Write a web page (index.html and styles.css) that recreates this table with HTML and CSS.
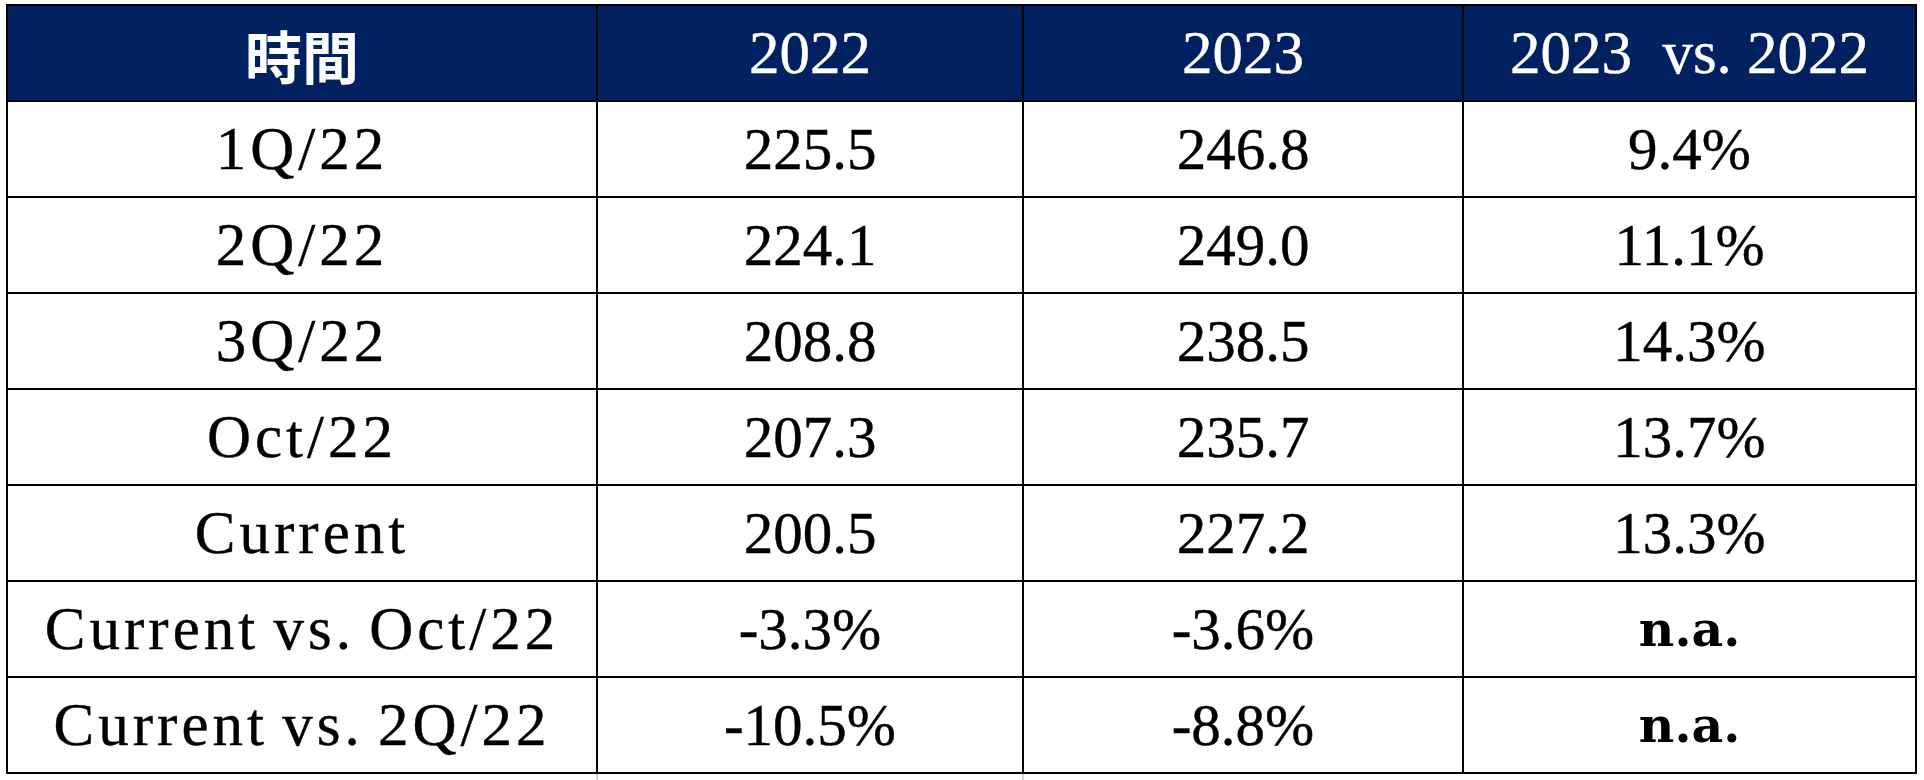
FILE: index.html
```html
<!DOCTYPE html>
<html lang="zh-Hant">
<head>
<meta charset="utf-8">
<title>Table</title>
<link rel="stylesheet" href="styles.css">
</head>
<body>
<div class="table">
  <div class="cell head cjk">時間</div>
  <div class="cell head">2022</div>
  <div class="cell head">2023</div>
  <div class="cell head pre">2023  vs. 2022</div>

  <div class="cell label">1Q/22</div>
  <div class="cell">225.5</div>
  <div class="cell">246.8</div>
  <div class="cell">9.4%</div>

  <div class="cell label">2Q/22</div>
  <div class="cell">224.1</div>
  <div class="cell">249.0</div>
  <div class="cell">11.1%</div>

  <div class="cell label">3Q/22</div>
  <div class="cell">208.8</div>
  <div class="cell">238.5</div>
  <div class="cell">14.3%</div>

  <div class="cell label">Oct/22</div>
  <div class="cell">207.3</div>
  <div class="cell">235.7</div>
  <div class="cell">13.7%</div>

  <div class="cell label">Current</div>
  <div class="cell">200.5</div>
  <div class="cell">227.2</div>
  <div class="cell">13.3%</div>

  <div class="cell label">Current vs. Oct/22</div>
  <div class="cell">-3.3%</div>
  <div class="cell">-3.6%</div>
  <div class="cell na">n.a.</div>

  <div class="cell label">Current vs. 2Q/22</div>
  <div class="cell">-10.5%</div>
  <div class="cell">-8.8%</div>
  <div class="cell na">n.a.</div>
</div>
<div class="spill">
  <div class="spill-col line"></div>
  <div class="spill-col line"></div>
</div>
</body>
</html>
```
FILE: styles.css
```css
html, body {
  margin: 0;
  padding: 0;
  background: #ffffff;
}

body {
  padding: 4px 0 0 6px;
  font-family: "Liberation Serif", "Noto Sans CJK TC", serif;
  color: #000000;
}

.table {
  display: grid;
  grid-template-columns: 588px 424px 438px 451px;
  grid-auto-rows: 94px;
  gap: 2px;
  width: max-content;
  background: #000000;
  border: 2px solid #000000;
}

.cell {
  background: #ffffff;
  display: flex;
  align-items: center;
  justify-content: center;
  font-size: 59px;
  white-space: nowrap;
  -webkit-text-stroke: 0.4px currentColor;
}

.head {
  background: #002060;
  color: #ffffff;
  font-size: 61px;
}

.cjk {
  font-family: "Noto Sans CJK TC", sans-serif;
  font-weight: 700;
  font-size: 57px;
  padding-top: 2px;
  -webkit-text-stroke: 0;
}

.pre {
  white-space: pre;
}

.label {
  font-size: 61px;
  letter-spacing: 4px;
  word-spacing: -5px;
}

.na {
  font-family: "DejaVu Serif", serif;
  font-weight: 700;
  font-size: 49px;
  -webkit-text-stroke: 0;
}

.spill {
  display: grid;
  grid-template-columns: 590px 426px;
  height: 6px;
  margin-left: 2px;
}

.spill-col {
  box-sizing: border-box;
}

.line {
  border-right: 2px solid #d4d4d4;
}
```
